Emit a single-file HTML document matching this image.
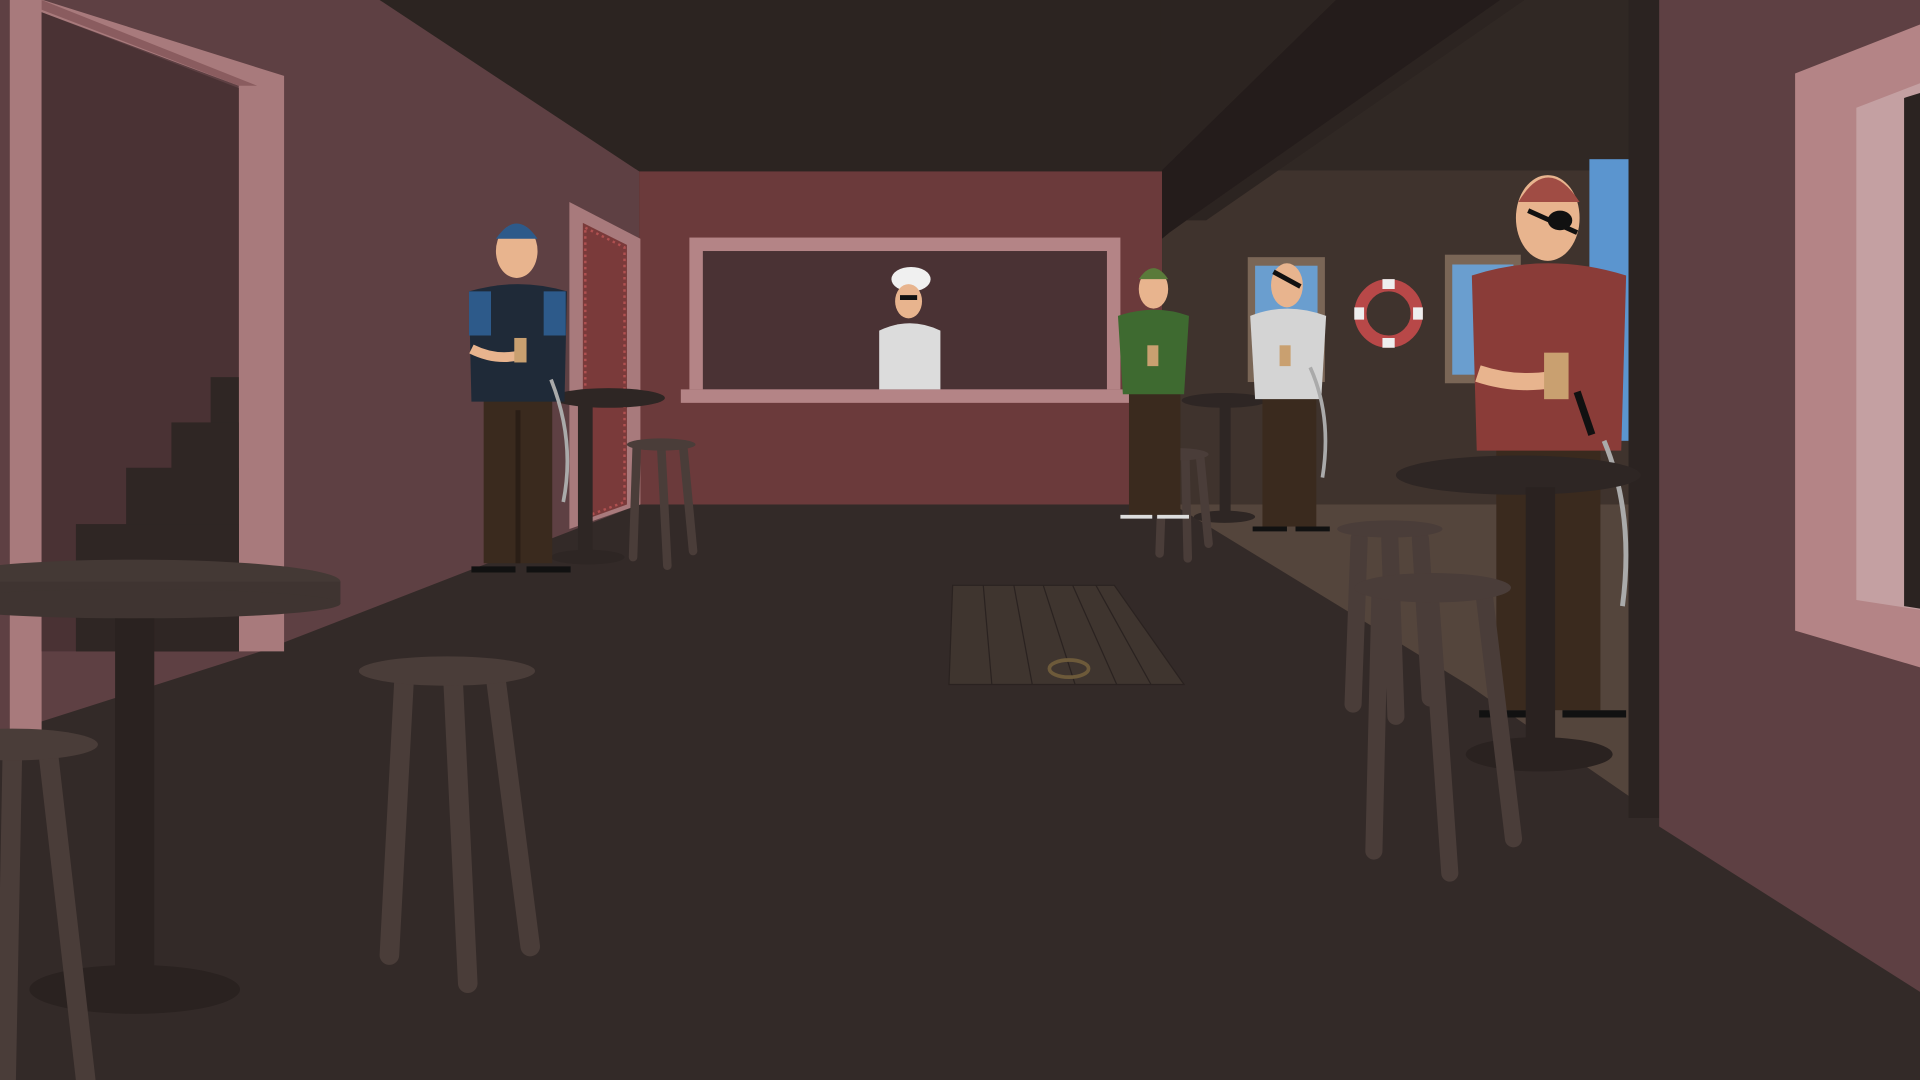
<!DOCTYPE html>
<html><head><meta charset="utf-8"><style>html,body{margin:0;padding:0;background:#332a28;overflow:hidden}svg{display:block}</style></head><body>
<svg width="1920" height="1080" viewBox="0 0 1568 882" preserveAspectRatio="none" xmlns="http://www.w3.org/2000/svg">
<rect width="1568" height="882" fill="#332a28"/>
<!-- ceiling -->
<polygon points="310,0 1330,0 1330,0 948,140 522,140" fill="#2c2421"/>
<rect x="948" y="0" width="382" height="140" fill="#2c2421"/>
<!-- left wall -->
<polygon points="0,0 310,0 522,140 522,412 213,532 0,600" fill="#5e4043"/>
<!-- back wall -->
<rect x="522" y="140" width="427" height="272" fill="#6b3a3b"/>
<!-- right back room -->
<polygon points="949,139 1330,139 1330,412 949,412" fill="#3f332d"/>
<polygon points="1225,0 1330,0 1330,139 1030,139" fill="#302824"/>
<polygon points="1225,0 1245,0 985,180 969,180" fill="#2c2421"/>
<polygon points="949,139 1091,0 1225,0 969,180 955,190 949,195" fill="#241c1b"/>
<polygon points="958,412 1330,412 1330,650 1200,560" fill="#54453c"/>
<!-- blue window -->
<rect x="1298" y="130" width="32" height="230" fill="#5b95cf"/>
<!-- pictures -->
<rect x="1019" y="210" width="63" height="102" fill="#7a6656"/><rect x="1025" y="217" width="51" height="88" fill="#6a9ecf"/>
<rect x="1180" y="208" width="62" height="105" fill="#7a6656"/><rect x="1186" y="216" width="50" height="90" fill="#6a9ecf"/>
<!-- lifebuoy -->
<circle cx="1134" cy="256" r="23" fill="none" stroke="#b84848" stroke-width="10"/>
<g stroke="#eee" stroke-width="10"><path d="M1134 228v8M1134 276v8M1106 256h8M1154 256h8"/></g>
<!-- service window -->
<rect x="563" y="194" width="352" height="124" fill="#b48486"/>
<rect x="574" y="205" width="330" height="113" fill="#4a3234"/>
<rect x="556" y="318" width="366" height="11" fill="#b48486"/>
<!-- pillar + right wall -->
<rect x="1330" y="0" width="25" height="668" fill="#2b2321"/>
<polygon points="1355,0 1568,0 1568,810 1355,675" fill="#5e4043"/>
<polygon points="1466,60 1568,20 1568,545 1466,515" fill="#b48486"/>
<polygon points="1516,88 1568,68 1568,498 1516,490" fill="#c4a0a2"/>
<polygon points="1555,80 1568,76 1568,497 1555,495" fill="#2b2321"/>
<!-- left door -->
<polygon points="8,0 35,0 232,62 232,532 195,532 195,70 34,10 34,600 8,600" fill="#a87a7c"/>
<polygon points="34,10 195,72 195,532 34,532" fill="#4a3234"/>
<polygon points="34,8 195,70 210,70 34,0" fill="#8a5c5f"/>
<!-- stairs -->
<rect x="172" y="308" width="23" height="224" fill="#2f2624"/>
<rect x="140" y="345" width="55" height="187" fill="#2f2624"/>
<rect x="103" y="382" width="92" height="150" fill="#2f2624"/>
<rect x="62" y="428" width="133" height="104" fill="#2f2624"/>
<!-- curtain door -->
<polygon points="465,165 523,195 523,412 465,432" fill="#a87a7c"/>
<polygon points="476,182 512,200 512,412 476,425" fill="#7a3a3a"/>
<polygon points="478,186 510,202 510,410 478,422" fill="none" stroke="#b05050" stroke-width="2" stroke-dasharray="2 3"/>
<!-- hatch -->
<polygon points="778,478 910,478 967,559 775,559" fill="#3f352f" stroke="#2a2220"/>
<g stroke="#2a2220"><line x1="803" y1="478" x2="810" y2="559"/><line x1="828" y1="478" x2="843" y2="559"/><line x1="852" y1="478" x2="878" y2="559"/><line x1="876" y1="478" x2="912" y2="559"/><line x1="895" y1="478" x2="940" y2="559"/></g>
<ellipse cx="873" cy="546" rx="16" ry="7" fill="none" stroke="#6d5a3a" stroke-width="3"/>
<!-- far tables -->
<g fill="#2e2624">
<ellipse cx="497" cy="325" rx="46" ry="8"/><rect x="472" y="330" width="12" height="125"/><ellipse cx="480" cy="455" rx="30" ry="6"/>
<ellipse cx="1000" cy="327" rx="35" ry="6"/><rect x="996" y="330" width="9" height="92"/><ellipse cx="1000" cy="422" rx="25" ry="5"/>
</g>
<g stroke="#4a3d39" stroke-width="7" stroke-linecap="round" fill="none"><path d="M520 365l-3 90M540 365l5 97M558 365l8 85M950 372l-3 80M968 372l2 84M980 372l7 72"/></g>
<ellipse cx="540" cy="363" rx="28" ry="5" fill="#4a3d39"/><ellipse cx="963" cy="371" rx="24" ry="5" fill="#4a3d39"/>
<!-- blue pirate -->
<g>
<rect x="395" y="320" width="56" height="140" fill="#3a2a1e"/><rect x="421" y="335" width="4" height="125" fill="#2a1e16"/>
<path d="M383 238q40-12 80 0l-2 90h-76z" fill="#1f2a38"/><path d="M383 238h18v36h-18zM444 238h18v36h-18z" fill="#2d5a8a"/>
<ellipse cx="422" cy="205" rx="17" ry="22" fill="#e8b48e"/><path d="M405 195q17-25 34 0z" fill="#2d5a8a"/>
<path d="M385 285q20 10 40 5" stroke="#e8b48e" stroke-width="8" fill="none"/><rect x="420" y="276" width="10" height="20" fill="#c9a070"/>
<path d="M385 465h36M430 465h36" stroke="#111" stroke-width="5"/><path d="M450 310q20 50 10 100" stroke="#aaa" stroke-width="3" fill="none"/>
</g>
<!-- chef -->
<g><ellipse cx="744" cy="228" rx="16" ry="10" fill="#f0f0f0"/><ellipse cx="742" cy="246" rx="11" ry="14" fill="#e8b48e"/><path d="M718 270q25-12 50 0v48h-50z" fill="#dcdcdc"/><path d="M735 243h14" stroke="#111" stroke-width="4"/></g>
<!-- green pirate -->
<g><rect x="922" y="318" width="42" height="103" fill="#3a2a1e"/><path d="M913 258q30-10 58 0l-4 64h-50z" fill="#3e6a30"/><ellipse cx="942" cy="236" rx="12" ry="16" fill="#e8b48e"/><path d="M930 228q12-18 24 0z" fill="#5a7a3a"/><rect x="937" y="282" width="9" height="17" fill="#c9a070"/><path d="M915 422h26M945 422h26" stroke="#ddd" stroke-width="3"/></g>
<!-- white-shirt pirate -->
<g><rect x="1031" y="320" width="44" height="110" fill="#3a2a1e"/><path d="M1021 258q30-12 62 0l-4 68h-54z" fill="#d4d4d4"/><ellipse cx="1051" cy="233" rx="13" ry="18" fill="#e8b48e"/><path d="M1040 222l22 12" stroke="#111" stroke-width="4"/><rect x="1045" y="282" width="9" height="17" fill="#c9a070"/><path d="M1023 432h28M1058 432h28" stroke="#111" stroke-width="4"/><path d="M1070 300q18 40 10 90" stroke="#aaa" stroke-width="3" fill="none"/></g>
<!-- big red pirate -->
<g><rect x="1222" y="360" width="85" height="220" fill="#3a2a1e"/><path d="M1202 225q62-20 126 0l-4 143h-118z" fill="#8a3c38"/><ellipse cx="1264" cy="178" rx="26" ry="35" fill="#e8b48e"/><path d="M1240 165q24-40 50 0z" fill="#a04c44"/><path d="M1248 172l40 18" stroke="#111" stroke-width="4"/><ellipse cx="1274" cy="180" rx="10" ry="8" fill="#111"/><path d="M1207 305q30 10 60 5" stroke="#e8b48e" stroke-width="14" fill="none"/><rect x="1261" y="288" width="20" height="38" fill="#c9a070"/><path d="M1208 583h40M1276 583h52" stroke="#111" stroke-width="6"/><path d="M1310 360q25 60 15 135" stroke="#aaa" stroke-width="4" fill="none"/><path d="M1288 320l12 35" stroke="#111" stroke-width="6"/></g>
<!-- near right table -->
<ellipse cx="1240" cy="388" rx="100" ry="16" fill="#2e2624"/><rect x="1246" y="398" width="24" height="218" fill="#2a2220"/><ellipse cx="1257" cy="616" rx="60" ry="14" fill="#2a2220"/>
<g stroke="#4a3d39" stroke-width="14" stroke-linecap="round" fill="none"><path d="M1110 440l-5 135M1135 440l5 145M1160 440l8 130M1127 485l-5 210M1168 485l16 228M1212 485l24 200"/></g>
<ellipse cx="1135" cy="432" rx="43" ry="7" fill="#4a3d39"/><ellipse cx="1170" cy="480" rx="64" ry="12" fill="#4a3d39"/>
<!-- near left table -->
<ellipse cx="110" cy="475" rx="168" ry="18" fill="#443935"/><rect x="0" y="475" width="278" height="18" fill="#3f3431"/><ellipse cx="110" cy="493" rx="168" ry="12" fill="#3f3431"/>
<rect x="94" y="505" width="32" height="302" fill="#2a2220"/><ellipse cx="110" cy="808" rx="86" ry="20" fill="#2a2220"/>
<g stroke="#4a3d39" stroke-width="16" stroke-linecap="round" fill="none"><path d="M330 555l-12 225M370 555l12 248M405 555l28 218M10 620l-5 262M40 620l30 262"/></g>
<ellipse cx="365" cy="548" rx="72" ry="12" fill="#4a3d39"/><ellipse cx="10" cy="608" rx="70" ry="13" fill="#4a3d39"/>
</svg>
</body></html>
